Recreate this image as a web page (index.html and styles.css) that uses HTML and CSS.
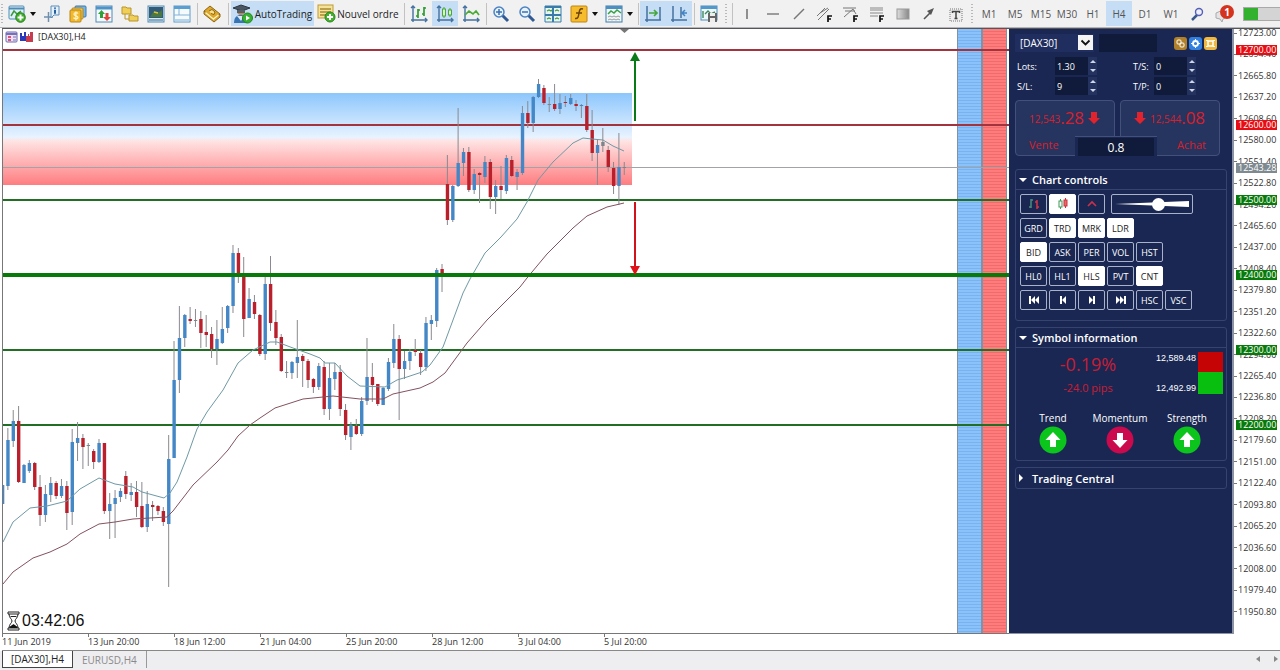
FILE: index.html
```html
<!DOCTYPE html>
<html lang="fr">
<head>
<meta charset="utf-8">
<title>[DAX30],H4</title>
<link rel="stylesheet" href="styles.css">
</head>
<body>
<header class="toolbar">
  <span class="grip"></span>
  <button class="tool tool-drop" aria-label="Nouveau graphique"><svg width="18" height="18" viewBox="0 0 18 18"><rect x="1" y="1" width="15" height="13" rx="1" fill="#dff0fb" stroke="#4f8cb5"/><path d="M1 3.500h15" stroke="#4f8cb5" stroke-width="2"/><path d="M3 11l3-5 3 3 4-3" fill="none" stroke="#3b9a3b" stroke-width="1.500"/><circle cx="12.500" cy="12.500" r="4.800" fill="#3fae2a" stroke="#2a7d1c"/><path d="M12.500 9.500v6M9.500 12.500h6" stroke="#fff" stroke-width="2"/></svg><i class="caret"></i></button>
  <button class="tool" aria-label="Viseur"><svg width="18" height="18" viewBox="0 0 18 18"><path d="M1 12h9M5.500 7v10" stroke="#6f8fae" stroke-width="1.500"/><path d="M8 1h8v9h-5l-3 3z" fill="#e4f0fa" stroke="#5d8db5"/><path d="M12 4.800v4M12 2.500v1.300" stroke="#235fa0" stroke-width="2"/></svg></button>
  <button class="tool" aria-label="Observation du marché"><svg width="18" height="18" viewBox="0 0 18 18"><rect x="6" y="1" width="11" height="11" rx="1" fill="#76b5e6" stroke="#3878ad"/><rect x="3" y="3" width="11" height="11" rx="1" fill="#e8c860" stroke="#b98515"/><rect x="1" y="5" width="11" height="12" rx="1" fill="#f1b92f" stroke="#b98515"/><path d="M9 8.500c-1-1.500-4-1-4 .7 0 2 4 1.200 4 3.200 0 1.800-3.500 1.900-4.500.3M6.900 6.500v9" stroke="#fff3c4" stroke-width="1.300" fill="none"/></svg></button>
  <button class="tool" aria-label="Fenêtre de données"><svg width="18" height="18" viewBox="0 0 18 18"><rect x="1" y="1" width="16" height="16" fill="#f4f9fd" stroke="#4f8cb5"/><path d="M1 3h16" stroke="#4d93c8" stroke-width="3"/><path d="M6.500 5l3.500 4H8v4H5V9H3z" fill="#2fa137"/><path d="M12 16l-4-4h2.500V8h3v4H16z" fill="#e0453a"/></svg></button>
  <button class="tool" aria-label="Navigateur"><svg width="18" height="18" viewBox="0 0 18 18"><path d="M1 2h4l1 1h4v6H1zM8 10h4l1 1h4v5H8z" fill="#f0cf58" stroke="#b9952c"/><path d="M4 9v5h4" fill="none" stroke="#b9952c"/></svg></button>
  <button class="tool" aria-label="Terminal"><svg width="18" height="18" viewBox="0 0 18 18"><rect x="1" y="1" width="16" height="16" fill="#dce8f0" stroke="#4f8cb5"/><rect x="2" y="2" width="14" height="11" fill="#315b78"/><path d="M3 12l4-6 4 2 4-3v7z" fill="#4b7840"/><path d="M7 7l4 1" stroke="#d8c33c" stroke-width="1.500"/><path d="M2 15h14" stroke="#84aac5" stroke-width="2"/></svg></button>
  <button class="tool" aria-label="Testeur"><svg width="18" height="18" viewBox="0 0 18 18"><rect x="1" y="1" width="16" height="16" fill="#f5fafd" stroke="#5f9cc8"/><path d="M1 2.500h16" stroke="#5b9fd0" stroke-width="3"/><path d="M1 10h16M6 4v6" stroke="#83b4d6"/><path d="M2 15h14" stroke="#b7d5e8" stroke-width="2"/></svg></button>
  <span class="sep"></span>
  <button class="tool" aria-label="MetaEditor"><svg width="18" height="18" viewBox="0 0 18 18"><path d="M1 6l6-5 10 8v3l-6 5L1 9z" fill="#dfa62a" stroke="#8a681b"/><path d="M1 6l10 8 6-5" fill="none" stroke="#8a681b"/><path d="M2.500 7.500l8 6.500 5-4" fill="none" stroke="#fff3b8" stroke-width="1.500"/><path d="M6 6l3-1.500 3 2.500-1 2.500-3-1" fill="#fae08a" stroke="#8a681b"/></svg></button>
  <span class="sep sep-wide"></span>
  <button class="tool tool-auto pressed"><svg width="20" height="20" viewBox="0 0 20 20"><circle cx="8" cy="7" r="4" fill="#bd8354"/><path d="M0 4l8-3 9 3-8 3z" fill="#4a5661" stroke="#2e3842"/><path d="M4 6v3h8V6" fill="#535f69"/><path d="M1 19c0-7 4-8 7-8s6 2 6 8z" fill="#3775b4"/><path d="M4 12l4 5 3-5" fill="#dce9f4"/><circle cx="14.500" cy="14" r="5" fill="#37b131" stroke="#22871f"/><path d="M13 11.500v5l4-2.500z" fill="#fff"/></svg><span>AutoTrading</span></button>
  <button class="tool tool-order"><svg width="19" height="19" viewBox="0 0 19 19"><rect x="1" y="1" width="15" height="13" fill="#f6e399" stroke="#bd9b32"/><path d="M3 5h11M3 8h11M3 11h6" stroke="#a78935" stroke-width="1.500"/><circle cx="13" cy="13" r="5" fill="#45b22d" stroke="#2b831e"/><path d="M13 10v6M10 13h6" stroke="#fff" stroke-width="2"/></svg><span>Nouvel ordre</span></button>
  <span class="sep"></span>
  <button class="tool" aria-label="Barres"><svg width="18" height="18" viewBox="0 0 18 18"><path d="M3 1v16M1 15h16M1 3l2-2 2 2M15 13l2 2-2 2" fill="none" stroke="#4472a0" stroke-width="1.400"/><path d="M8 4v9M6 11h2M8 5h2M14 2v9M12 9h2M14 3h2" stroke="#2f9c2f" stroke-width="1.700"/></svg></button>
  <button class="tool pressed" aria-label="Chandeliers"><svg width="18" height="18" viewBox="0 0 18 18"><path d="M3 1v16M1 15h16M1 3l2-2 2 2M15 13l2 2-2 2" fill="none" stroke="#4472a0" stroke-width="1.400"/><path d="M8 2v11M14 3v9" stroke="#4aa63f"/><rect x="6.500" y="4" width="3" height="7" fill="#d8f2ca" stroke="#4aa63f"/><rect x="12.500" y="5" width="3" height="5" fill="#d8f2ca" stroke="#4aa63f"/></svg></button>
  <button class="tool" aria-label="Ligne"><svg width="18" height="18" viewBox="0 0 18 18"><path d="M3 1v16M1 15h16M1 3l2-2 2 2M15 13l2 2-2 2" fill="none" stroke="#4472a0" stroke-width="1.400"/><path d="M3 10l4-4 4 3 3-3 3 4" fill="none" stroke="#49ad35" stroke-width="1.700"/></svg></button>
  <span class="sep"></span>
  <button class="tool" aria-label="Zoom avant"><svg width="18" height="18" viewBox="0 0 18 18"><path d="M10 10l6 6" stroke="#315a93" stroke-width="3"/><circle cx="7" cy="7" r="5" fill="#e6f2fd" stroke="#4b83c1" stroke-width="1.500"/><path d="M7 4v6M4 7h6" stroke="#3c70ad" stroke-width="1.500"/></svg></button>
  <button class="tool" aria-label="Zoom arrière"><svg width="18" height="18" viewBox="0 0 18 18"><path d="M10 10l6 6" stroke="#315a93" stroke-width="3"/><circle cx="7" cy="7" r="5" fill="#e6f2fd" stroke="#4b83c1" stroke-width="1.500"/><path d="M4 7h6" stroke="#3c70ad" stroke-width="1.500"/></svg></button>
  <button class="tool" aria-label="Mosaïque"><svg width="18" height="18" viewBox="0 0 18 18"><path d="M1 1h16v16H1z" fill="#e7f5ee" stroke="#397cab"/><path d="M1 2h16M1 10h16M9 1v16" stroke="#397cab" stroke-width="2"/><path d="M3 6l2-1 2 1 1-1M11 6l2-1 2 1M3 14l2-1 2 1M11 14l2-1 2 1" fill="none" stroke="#3d9f48" stroke-width="1.300"/></svg></button>
  <button class="tool tool-drop" aria-label="Indicateurs"><svg width="18" height="18" viewBox="0 0 18 18"><rect x="1" y="1" width="16" height="16" rx="1" fill="#f6bc2c" stroke="#bf8411"/><path d="M13 4c-3-1-3.500 1-4 4-.6 4-1 6-4 5.500M6 8h6" fill="none" stroke="#6e430b" stroke-width="1.500"/></svg><i class="caret"></i></button>
  <button class="tool tool-drop" aria-label="Modèles"><svg width="18" height="18" viewBox="0 0 18 18"><rect x="1" y="1" width="16" height="16" fill="#f2f8fa" stroke="#3a7cab"/><path d="M1 2.500h16" stroke="#4c8fc0" stroke-width="3"/><path d="M3 9l3-3 3 2 3-3 4 3" fill="none" stroke="#37a144" stroke-width="1.500"/><path d="M3 12l2-1 2 1 2-1 2 1 2-1 2 1M3 15l2-1 2 1 2-1 2 1 2-1 2 1" fill="none" stroke="#9a9a9a"/></svg><i class="caret"></i></button>
  <span class="sep"></span>
  <button class="tool pressed" aria-label="Défilement auto"><svg width="18" height="18" viewBox="0 0 18 18"><path d="M3 1v16M1 15h16M16 2v13" fill="none" stroke="#4472a0" stroke-width="1.500"/><path d="M5 8h8M10 5l3 3-3 3" fill="none" stroke="#45a63b" stroke-width="1.700"/></svg></button>
  <button class="tool pressed" aria-label="Décalage du graphique"><svg width="18" height="18" viewBox="0 0 18 18"><path d="M3 1v16M1 15h16M11 2v11" fill="none" stroke="#4472a0" stroke-width="1.500"/><path d="M17 8h-5M15 5l-3 3 3 3" fill="none" stroke="#4382c4" stroke-width="1.500"/></svg></button>
  <span class="sep"></span>
  <button class="tool" aria-label="Enregistrer"><svg width="18" height="18" viewBox="0 0 18 18"><rect x="1" y="1" width="16" height="14" fill="#eef7fb" stroke="#4d8ebb"/><path d="M1 2.500h16" stroke="#5299c9" stroke-width="3"/><path d="M3 13V6M5 9l3-3 3 3 4-2" fill="none" stroke="#3e8a60" stroke-width="1.400"/><path d="M8 8h9v9H8z" fill="#666"/><path d="M10 8h5v3h-5zM10 13h5v4h-5z" fill="#eee"/></svg></button>
  <span class="grip grip-wide"></span><span class="sep"></span>
  <button class="tool" aria-label="Ligne verticale"><svg width="18" height="18" viewBox="0 0 18 18"><path d="M9 4v10" stroke="#666" stroke-width="1.400"/></svg></button>
  <button class="tool" aria-label="Ligne horizontale"><svg width="18" height="18" viewBox="0 0 18 18"><path d="M3 9h12" stroke="#777" stroke-width="1.400"/></svg></button>
  <button class="tool" aria-label="Ligne de tendance"><svg width="18" height="18" viewBox="0 0 18 18"><path d="M4 14L14 4" stroke="#777" stroke-width="1.400"/></svg></button>
  <button class="tool" aria-label="Canal"><svg width="18" height="18" viewBox="0 0 18 18"><path d="M1 11l8-8M5 12l8-8M4 8l8-5M2 15l6-6" stroke="#777"/><path d="M12 17v-6h4M12 14h3" fill="none" stroke="#111" stroke-width="1.700"/></svg></button>
  <button class="tool" aria-label="Éventail Fibonacci"><svg width="18" height="18" viewBox="0 0 18 18"><path d="M1 3h13M3 6h10M2 12l9-8 3 5" fill="none" stroke="#777"/><path d="M12 17v-6h4M12 14h3" fill="none" stroke="#111" stroke-width="1.700"/></svg></button>
  <button class="tool" aria-label="Fibonacci"><svg width="18" height="18" viewBox="0 0 18 18"><path d="M2 3h13M2 5h13M2 8h13M2 11h8" stroke="#888"/><path d="M12 17v-6h4M12 14h3" fill="none" stroke="#111" stroke-width="1.700"/></svg></button>
  <button class="tool" aria-label="Formes"><svg width="18" height="18" viewBox="0 0 18 18"><defs><linearGradient id="shape"><stop stop-color="#ddd"/><stop offset="1" stop-color="#888"/></linearGradient></defs><rect x="3" y="4" width="12" height="10" fill="url(#shape)" stroke="#999"/></svg></button>
  <button class="tool" aria-label="Flèche"><svg width="18" height="18" viewBox="0 0 18 18"><path d="M4 14l7-7" stroke="#555" stroke-width="1.600"/><path d="M7 6l7-3-3 7z" fill="#555"/></svg></button>
  <button class="tool" aria-label="Texte"><svg width="18" height="18" viewBox="0 0 18 18"><rect x="4" y="4" width="12" height="12" fill="#eee" stroke="#777" stroke-dasharray="1 1"/><path d="M6.500 8V6.500h7V8M10 6.500v7M8.500 13.500h3" fill="none" stroke="#444" stroke-width="1.500"/></svg></button>
  <span class="grip grip-wide"></span>
  <button class="tool">M1</button><button class="tool">M5</button><button class="tool">M15</button><button class="tool">M30</button><button class="tool">H1</button><button class="tool pressed">H4</button><button class="tool">D1</button><button class="tool">W1</button>
  <button class="tool" aria-label="Rechercher"><svg width="18" height="18" viewBox="0 0 18 18"><path d="M9 10l-5 5" stroke="#39598c" stroke-width="2.500"/><circle cx="11" cy="7" r="3.500" fill="#eef" stroke="#5360b4" stroke-width="1.400"/></svg></button>
  <button class="tool chat" aria-label="Messages"><svg width="18" height="18" viewBox="0 0 18 18"><path d="M2 8l7-3 5 6-5 3-1 3-2-3-4-1z" fill="#e4e4e4" stroke="#aaa"/></svg><span class="badge">1</span></button>
  <span class="signal"></span>
</header>

<main class="workspace">
  <section class="plot" aria-label="Graphique DAX30">
    <div class="zone"></div>
    <div class="strip strip-blue"></div>
    <div class="strip strip-red"></div>
    <svg class="canvas" id="canvas"></svg>
    <div class="chart-title">
      <svg width="28" height="12" viewBox="0 0 28 12"><rect x="1" y="1" width="11" height="10" rx="1" fill="#eee2f2" stroke="#6c68b0"/><path d="M1 3h11" stroke="#7472ba" stroke-width="2"/><path d="M3 5h3v2H3zM3 8h3v2H3z" fill="#d9537b"/><path d="M8 6h3M8 9h3" stroke="#7472ba"/><path d="M15 2h2v3h2V1h2v9h-6z" fill="#2b38bc"/><path d="M21 5h2V3h1v2h1V1h3v10h-7z" fill="#c73d50"/></svg>
      <span>[DAX30],H4</span>
    </div>
    <div class="countdown"><svg width="13" height="20" viewBox="0 0 13 20"><path d="M1 1h11v2H1zM1 17h11v2H1zM2 3c0 4 3 5 3 7s-3 3-3 7M11 3c0 4-3 5-3 7s3 3 3 7M3.500 5.500h6" fill="none" stroke="#222"/><path d="M2.500 17c0-2 3-3 4-4 1 1 4 2 4 4z" fill="#111"/></svg><span>03:42:06</span></div>
  </section>

  <aside class="panel">
    <div class="symbol-row">
      <div class="picker"><select aria-label="Symbole"><option>[DAX30]</option></select><svg width="15" height="15" viewBox="0 0 15 15"><path d="M0 0h15v15H0z" fill="#f4f4f4"/><path d="M3.500 5.500l4 4 4-4" fill="none" stroke="#111" stroke-width="1.800"/></svg></div>
      <input class="dark-input" aria-label="Commentaire">
      <div class="quick">
        <button class="quick-btn brown" aria-label="Lier"><svg width="9" height="9" viewBox="0 0 9 9"><rect x="1" y="1" width="4" height="4" rx="1" fill="none" stroke="#fff"/><rect x="4" y="4" width="4" height="4" rx="1" fill="none" stroke="#fff"/></svg></button>
        <button class="quick-btn azure" aria-label="Réglages"><svg width="9" height="9" viewBox="0 0 9 9"><circle cx="4.500" cy="4.500" r="2.500" fill="none" stroke="#fff" stroke-width="1.800"/><path d="M4.500 0v2M4.500 7v2M0 4.500h2M7 4.500h2" stroke="#fff"/></svg></button>
        <button class="quick-btn amber" aria-label="Agrandir"><svg width="9" height="9" viewBox="0 0 9 9"><rect x="2" y="2" width="5" height="5" fill="none" stroke="#fff" stroke-width="1.500"/><path d="M0 1.500h2M7 1.500h2M0 7.500h2M7 7.500h2" stroke="#fff"/></svg></button>
      </div>
    </div>
    <div class="fields">
      <label for="lots">Lots:</label><div class="spin"><input id="lots" value="1.30"><span><button class="up" aria-label="Plus"></button><button class="down" aria-label="Moins"></button></span></div>
      <label for="ts">T/S:</label><div class="spin"><input id="ts" value="0"><span><button class="up" aria-label="Plus"></button><button class="down" aria-label="Moins"></button></span></div>
      <label for="sl">S/L:</label><div class="spin"><input id="sl" value="9"><span><button class="up" aria-label="Plus"></button><button class="down" aria-label="Moins"></button></span></div>
      <label for="tp">T/P:</label><div class="spin"><input id="tp" value="0"><span><button class="up" aria-label="Plus"></button><button class="down" aria-label="Moins"></button></span></div>
    </div>
    <div class="trade">
      <button class="deal sell"><span class="quote"><small>12,543</small><b>.28</b><svg width="12" height="14" viewBox="0 0 12 14"><path d="M3 1h6v6h3l-6 6-6-6h3z" fill="#e0232d"/></svg></span><span class="side">Vente</span></button>
      <button class="deal buy"><span class="quote"><svg width="12" height="14" viewBox="0 0 12 14"><path d="M3 1h6v6h3l-6 6-6-6h3z" fill="#e0232d"/></svg><small>12,544</small><b>.08</b></span><span class="side">Achat</span></button>
      <div class="spread"><input value="0.8" aria-label="Spread" readonly></div>
    </div>

    <section class="box controls">
      <h2><i class="fold open"></i>Chart controls</h2>
      <div class="rows">
        <div class="row">
          <button class="key" aria-label="Barres"><svg width="12" height="12" viewBox="0 0 12 12"><path d="M3 1v9M1 9h2M3 2h2" stroke="#4a8b7d" stroke-width="1.500"/><path d="M9 2v9M7 4h2M9 9h2" stroke="#d13648" stroke-width="1.500"/></svg></button>
          <button class="key on" aria-label="Chandeliers"><svg width="12" height="12" viewBox="0 0 12 12"><path d="M3.500 1v10" stroke="#3f9a57"/><rect x="2" y="3" width="3" height="6" fill="#fff" stroke="#3f9a57"/><path d="M8.500 0v10" stroke="#c7343f"/><rect x="7" y="2" width="3" height="6" fill="#e66" stroke="#c7343f"/></svg></button>
          <button class="key" aria-label="Ligne"><svg width="12" height="12" viewBox="0 0 12 12"><path d="M2 8l4-4 4 4" fill="none" stroke="#c9304a" stroke-width="1.700"/></svg></button>
          <div class="slider"><svg viewBox="0 0 74 6" preserveAspectRatio="none"><path d="M0 3L74 0v6z" fill="#fff"/></svg><input type="range" min="0" max="100" value="60" aria-label="Zoom"></div>
        </div>
        <div class="row"><button class="key">GRD</button><button class="key on">TRD</button><button class="key on">MRK</button><button class="key on">LDR</button></div>
        <div class="row"><button class="key on">BID</button><button class="key">ASK</button><button class="key">PER</button><button class="key">VOL</button><button class="key">HST</button></div>
        <div class="row"><button class="key">HL0</button><button class="key">HL1</button><button class="key on">HLS</button><button class="key">PVT</button><button class="key on">CNT</button></div>
        <div class="row">
          <button class="key" aria-label="Début"><svg width="12" height="10" viewBox="0 0 12 10"><path d="M1 1h2v8H1zM7 1v8L3 5zM11 1v8L7 5z" fill="#fff"/></svg></button>
          <button class="key" aria-label="Précédent"><svg width="12" height="10" viewBox="0 0 12 10"><path d="M3 1h2v8H3zM9 1v8L5 5z" fill="#fff"/></svg></button>
          <button class="key" aria-label="Suivant"><svg width="12" height="10" viewBox="0 0 12 10"><path d="M7 1h2v8H7zM3 1v8l4-4z" fill="#fff"/></svg></button>
          <button class="key" aria-label="Fin"><svg width="12" height="10" viewBox="0 0 12 10"><path d="M9 1h2v8H9zM5 1v8l4-4zM1 1v8l4-4z" fill="#fff"/></svg></button>
          <button class="key">HSC</button><button class="key">VSC</button>
        </div>
      </div>
    </section>

    <section class="box symbol">
      <h2><i class="fold open"></i>Symbol information</h2>
      <div class="stats">
        <div class="change"><strong>-0.19%</strong><span>-24.0 pips</span></div>
        <div class="range"><span>12,589.48</span><span>12,492.99</span></div>
        <div class="meter"></div>
      </div>
      <div class="gauges">
        <div>Trend<svg width="28" height="28" viewBox="0 0 28 28"><circle cx="14" cy="14" r="13.500" fill="#0cc51c"/><path d="M14 6l7.500 8H17v7h-6v-7H6.500z" fill="#fff"/></svg></div>
        <div>Momentum<svg width="28" height="28" viewBox="0 0 28 28"><circle cx="14" cy="14" r="13.500" fill="#cb0a4d"/><path d="M14 22l7.500-8H17V7h-6v7H6.500z" fill="#fff"/></svg></div>
        <div>Strength<svg width="28" height="28" viewBox="0 0 28 28"><circle cx="14" cy="14" r="13.500" fill="#0cc51c"/><path d="M14 6l7.500 8H17v7h-6v-7H6.500z" fill="#fff"/></svg></div>
      </div>
    </section>
    <section class="box"><h2><i class="fold"></i>Trading Central</h2></section>
  </aside>

  <div class="scale" id="scale"></div>
</main>

<div class="dates">
  <span>11 Jun 2019</span><span>13 Jun 20:00</span><span>18 Jun 12:00</span><span>21 Jun 04:00</span><span>25 Jun 20:00</span><span>28 Jun 12:00</span><span>3 Jul 04:00</span><span>5 Jul 20:00</span>
</div>

<nav class="tabs">
  <button class="tab active">[DAX30],H4</button><button class="tab">EURUSD,H4</button>
  <span class="scrollers"><button class="left" aria-label="Gauche"></button><button class="right" aria-label="Droite"></button></span>
</nav>
<script src="chart.js"></script>
</body>
</html>
```
FILE: styles.css
```css
* { box-sizing: border-box; }
body { margin: 0; min-height: 100vh; display: flex; flex-direction: column; background: #fff; color: #222; font-family: "Open Sans", "Noto Sans", sans-serif; font-size: 11px; overflow-x: hidden; }
button, input, select { font: inherit; color: inherit; margin: 0; padding: 0; border: 0; background: none; border-radius: 0; min-width: 0; }
svg { display: block; flex: none; }

/* Toolbar */
.toolbar { display: flex; align-items: center; height: 28px; background: #f1f1f2; border-bottom: 1px solid #b5b5b7; overflow: hidden; flex: none; }
.tool { flex: none; width: 26px; height: 25px; display: flex; align-items: center; justify-content: center; font-size: 10px; color: #555; white-space: nowrap; }
.tool-drop { width: 35px; gap: 4px; }
.tool-auto { width: 83px; gap: 2px; color: #222; }
.tool-order { width: 88px; gap: 1px; color: #222; }
.pressed { background: #c5def5; }
.caret { border: 3px solid transparent; border-top: 4px solid #111; border-bottom: 0; }
.sep { flex: none; width: 4px; height: 22px; background: linear-gradient(#c2c2c2, #c2c2c2) center / 1px 100% no-repeat; }
.sep-wide { width: 6px; }
.grip { flex: none; width: 4px; height: 20px; background: repeating-linear-gradient(#b9b9b9 0 1px, transparent 1px 3px) center / 2px 100% no-repeat; }
.grip-wide { width: 8px; }
.chat { position: relative; }
.badge { position: absolute; right: 2px; top: 4px; width: 14px; height: 14px; border-radius: 7px; background: #d3331f; color: #fff; font-size: 10px; font-weight: 700; line-height: 14px; }
.signal { flex: 1; min-width: 32px; margin-left: 7px; height: 14px; border: 1px solid #a9a9a9; border-right: 0; background: linear-gradient(90deg, #32b12e 14px, #d4d4d4 14px); }

/* Workspace */
.workspace { flex: 1; display: flex; margin-left: 2px; border-top: 1px solid #55555a; min-height: 480px; }
.plot { flex: 1; position: relative; border-left: 1px solid #777; border-bottom: 1px solid #777; overflow: hidden; min-width: 0; }
.canvas { position: absolute; inset: 0; width: 100%; height: 100%; }
.zone { position: absolute; left: 0; top: 64px; width: 629px; height: 92px; background: linear-gradient(#8cc6fc 0%, #e8f3ff 48%, #ffe4e4 52%, #fe7d80 100%); }
.strip { position: absolute; top: 0; bottom: 0; width: 25px; border: 1px solid #8391a5; border-width: 0 1px; }
.strip-blue { right: 27px; background: repeating-linear-gradient(#8ac2fb 0 2px, #79b2ee 2px 3px); }
.strip-red { right: 2px; background: repeating-linear-gradient(#ff7c7c 0 2px, #f06b6c 2px 3px); }
.chart-title { position: absolute; left: 2px; top: 2px; display: flex; align-items: center; gap: 5px; font-size: 9px; line-height: 12px; }
.countdown { position: absolute; left: 4px; bottom: 2px; display: flex; align-items: center; gap: 2px; font: 16px/20px "Liberation Sans", Arial, sans-serif; color: #111; }

.scale { position: relative; width: 46px; flex: none; display: flex; flex-direction: column; justify-content: space-between; padding-bottom: 18px; font-size: 9px; line-height: 8px; color: #333; }
.scale span { display: flex; align-items: center; gap: 1px; }
.scale span::before { content: ""; width: 3px; height: 1px; background: #777; }
.scale .tag { position: absolute; left: 2px; width: 41px; height: 10px; line-height: 10px; padding-left: 2px; color: #fff; margin-top: -5px; }
.tag.red { background: #e80d12; }
.tag.green { background: #087a0a; }
.tag.gray { background: #7e8a90; }

.dates { height: 17px; flex: none; display: flex; margin-left: 2px; border-bottom: 1px solid #888; font-size: 9px; line-height: 15px; color: #333; }
.dates span { width: 86px; flex: none; background: linear-gradient(#777, #777) 0 0 / 1px 3px no-repeat; white-space: nowrap; }

.tabs { height: 19px; flex: none; display: flex; align-items: flex-start; background: #eeedf0; padding-left: 2px; }
.tab { height: 17px; padding: 0 9px; font-size: 10px; color: #8a8a8a; border-right: 1px solid #999; }
.tab.active { background: #fff; color: #222; border: 1px solid #444; border-top: 0; padding: 0 8px; }
.scrollers { margin-left: auto; display: flex; gap: 14px; padding: 5px 2px; }
.scrollers button { width: 4px; height: 6px; border: 3px solid transparent; }
.scrollers .left { border-right: 4px solid #888; border-left: 0; }
.scrollers .right { border-left: 4px solid #888; border-right: 0; }

/* Trading panel */
.panel { width: 225px; flex: none; background: #1a2753; color: #fff; padding: 5px 5px 0 6px; border-right: 2px solid #8b93a5; border-bottom: 1px solid #8b93a5; }
.symbol-row { display: flex; height: 18px; gap: 5px; align-items: center; }
.picker { position: relative; width: 79px; height: 18px; background: #1f2e5e; }
.picker select { appearance: none; width: 100%; height: 18px; padding-left: 5px; font-size: 10px; }
.picker svg { position: absolute; right: 1px; top: 1px; pointer-events: none; }
.dark-input { width: 58px; height: 18px; background: #101b3b; }
.quick { margin-left: auto; margin-right: 10px; display: flex; gap: 2px; }
.quick-btn { width: 13px; height: 13px; border-radius: 3px; display: grid; place-items: center; }
.brown { background: #b0812a; }
.azure { background: #3180e0; }
.amber { background: #f0b83f; }
.fields { display: grid; grid-template-columns: 38px 78px 21px 44px; grid-auto-rows: 18px; gap: 2px 0; margin-top: 5px; font-size: 9px; align-items: center; padding-left: 2px; }
.spin { display: flex; height: 18px; }
.spin input { width: 33px; background: #101b3b; padding-left: 2px; }
.spin span { display: flex; flex-direction: column; width: 9px; background: #23325f; }
.spin button { flex: 1; display: grid; place-items: center; }
.spin button::before { content: ""; border: 3px solid transparent; }
.spin .up::before { border-bottom-color: #cfd6ea; border-top: 0; }
.spin .down::before { border-top-color: #cfd6ea; border-bottom: 0; }

.trade { position: relative; display: grid; grid-template-columns: 1fr 1fr; gap: 5px; height: 56px; margin: 5px 7px 13px 0; }
.deal { background: #26355f; border: 1px solid #43517a; border-radius: 4px; color: #d81f2c; display: flex; flex-direction: column; justify-content: space-between; align-items: flex-start; padding: 1px 13px 0; }
.quote { display: flex; align-items: center; height: 31px; line-height: 26px; }
.quote small { font-size: 10px; padding-top: 2px; }
.quote b { font-size: 17px; font-weight: 400; }
.quote svg { margin: 0 4px; }
.buy .quote { margin-left: -4px; }
.side { font-size: 11px; line-height: 20px; }
.buy .side { align-self: flex-end; }
.spread { position: absolute; left: 0; right: 3px; bottom: 0; width: 82px; height: 20px; margin: 0 auto; background: #1a2753; border-top: 1px solid #43517a; padding: 1px 3px 0; }
.spread input { width: 100%; height: 18px; background: #101b3b; text-align: center; font-size: 12px; }

.box { border: 1px solid #35436f; border-radius: 3px; margin-bottom: 6px; }
.box h2 { margin: 0; height: 20px; display: flex; align-items: center; font-size: 11px; font-weight: 600; }
.fold { width: 16px; display: flex; padding-left: 3px; }
.fold::before { content: ""; border: 4px solid transparent; border-left-color: #fff; border-right: 0; }
.fold.open::before { border: 4px solid transparent; border-top-color: #fff; border-bottom: 0; }
.controls h2, .symbol h2 { border-bottom: 1px solid #35436f; }
.rows { display: flex; flex-direction: column; gap: 4px; padding: 4px 4px 10px; }
.row { display: flex; gap: 2px; }
.key { width: 27px; height: 20px; flex: none; border: 1px solid #a9b2cb; border-radius: 2px; font-size: 9px; display: grid; place-items: center; }
.key.on { background: #fff; color: #222; border-color: #fff; }
.slider { position: relative; width: 82px; height: 20px; margin-left: 4px; border: 1px solid #a9b2cb; border-radius: 2px; display: grid; align-items: center; padding: 0 3px; }
.slider svg { grid-area: 1 / 1; width: 100%; height: 6px; }
.slider input { grid-area: 1 / 1; width: 100%; height: 14px; appearance: none; position: relative; }
.slider input::-webkit-slider-thumb { appearance: none; width: 13px; height: 13px; border-radius: 7px; background: #fff; }

.stats { display: flex; height: 50px; padding: 4px 3px 2px 0; }
.change { flex: 1; display: flex; flex-direction: column; align-items: center; padding: 3px 0 0 4px; color: #c71e35; }
.change strong { font-size: 18px; font-weight: 400; line-height: 18px; }
.change span { font-size: 11px; line-height: 26px; white-space: nowrap; margin-top: 2px; }
.range { display: flex; flex-direction: column; justify-content: space-between; font: 9px/12px "Liberation Sans", Arial, sans-serif; padding-right: 2px; height: 42px; }
.meter { width: 25px; height: 42px; background: linear-gradient(#c50505 20px, #08bf10 20px); }
.gauges { display: grid; grid-template-columns: repeat(3, 67px); justify-content: center; padding: 12px 0 6px; margin-right: 2px; }
.gauges > div { display: flex; flex-direction: column; align-items: center; font-size: 10px; line-height: 16px; }
```
FILE: chart.js
```js
const NS = "http://www.w3.org/2000/svg";
const TOP_PRICE = 12723, PX_PER_POINT = 0.7497, TOP_Y = 33;
const ORIGIN = { x: 3, y: 29 };
const STEP = 5.36;
const priceY = p => TOP_Y + (TOP_PRICE - p) * PX_PER_POINT;

const canvas = document.getElementById("canvas");
const layer = document.createElementNS(NS, "g");
layer.setAttribute("transform", `translate(${-ORIGIN.x} ${-ORIGIN.y})`);
canvas.append(layer);

function add(name, attrs) {
  const el = document.createElementNS(NS, name);
  for (const k in attrs) el.setAttribute(k, attrs[k]);
  layer.append(el);
}

const levels = [
  [12700, "red", 2], [12600, "red", 2], [12543.28, "gray", 1],
  [12500, "green", 2], [12400, "green", 4], [12300, "green", 2], [12200, "green", 2]
];
const lineColor = { red: "#a3333c", gray: "#a0a4a8", green: "#236e25" };

function level([price, kind, width]) {
  const y = Math.round(priceY(price));
  add("rect", { x: 0, y: Math.floor(y - width / 2), width: "101%", height: width, fill: width === 4 ? "#087a0a" : lineColor[kind] });
}

// kind, body top, body bottom, wick top, wick bottom
const candles = `b 485 504 485 504|b 440 486 428 490|b 421 441 410 447|r 421 482 406 483|b 465 483 464 483|b 463 471 460 473|r 463 487 462 490|r 487 515 475 526|b 494 515 485 522|b 483 495 477 502|r 483 496 481 499|b 486 496 479 498|r 486 513 481 530|b 442 512 429 525|b 438 443 422 461|r 438 447 434 469|g 445 446 443 466|r 451 462 449 469|b 443 462 439 463|r 443 511 443 514|b 504 511 493 539|b 498 504 490 538|b 491 497 488 502|r 476 494 471 499|b 492 495 483 501|r 492 507 481 517|r 506 527 482 528|b 504 527 491 532|r 505 507 501 521|r 506 511 505 515|r 511 522 507 526|b 459 524 435 587|b 380 458 341 458|b 338 380 306 393|b 315 338 314 347|r 319 321 307 324|g 320 321 309 327|r 319 333 311 348|r 332 335 315 347|r 334 349 327 358|b 339 349 320 365|b 329 343 307 344|b 306 328 305 333|b 253 306 245 313|r 253 274 248 283|r 275 319 257 337|b 299 318 288 318|r 302 314 295 319|r 315 354 314 356|b 284 354 276 360|r 284 323 256 331|r 322 338 310 345|r 337 371 334 372|g 372 373 361 378|b 362 373 361 379|b 357 363 320 378|r 356 361 354 387|r 361 380 359 388|r 379 387 378 393|b 366 387 363 390|r 367 409 361 415|b 378 409 363 420|b 372 379 363 390|r 372 409 365 416|r 410 435 404 440|b 425 437 422 450|r 426 434 419 435|b 401 434 397 436|b 377 401 338 405|r 377 385 363 402|r 384 404 384 406|b 388 405 387 405|b 362 389 358 391|b 339 363 324 368|r 339 369 335 420|b 361 369 351 379|b 352 361 349 370|r 350 352 339 356|r 353 367 350 375|b 323 367 317 371|b 320 324 315 340|b 270 321 268 327|r 269 274 264 292|r 184 220 155 225|b 186 220 185 222|b 163 186 108 187|b 152 163 148 176|r 152 190 147 192|b 174 190 169 194|r 173 175 172 203|b 162 177 156 183|r 162 197 159 209|b 186 197 180 214|r 186 190 166 199|b 158 191 155 194|r 160 176 156 177|b 172 177 169 190|b 113 173 106 175|r 113 123 101 128|b 97 123 96 132|b 84 97 79 98|r 88 103 85 105|g 104 105 97 112|r 104 109 84 111|b 103 109 94 114|r 102 103 96 107|b 98 104 94 105|r 104 106 100 111|b 105 106 104 118|r 106 130 94 132|r 130 153 110 161|b 145 153 139 185|g 142 146 128 152|r 150 167 146 172|r 168 186 162 194|b 167 186 133 205|g 167 168 162 175`.split("|").map(s => s.split(" "));
const candleColor = { b: "#4487c6", r: "#b9202b", g: "#7d858c" };

levels.filter(l => l[2] !== 4).forEach(level);

const fast = "3,542 13,522 30,508 47,506 67,501 80,489 99,478 115,484 133,487 142,492 153,495 164,498 170,493 177,482 187,457 197,429 207,412 223,390 238,363 253,350 270,342 277,342 293,348 310,354 320,358 325,363 335,363 347,376 360,386 385,387 397,380 407,377 422,372 430,365 443,347 453,320 463,293 470,279 485,253 501,237 517,219 527,202 538,180 553,162 573,143 583,138 592,139 603,140 613,146 624,151";
const slow = "3,584 13,572 33,558 50,552 67,544 80,534 99,524 115,522 133,519 167,517 173,511 193,485 217,462 228,450 238,436 250,425 260,418 275,408 303,399 333,396 360,399 383,399 393,394 420,388 433,382 445,373 467,343 487,320 503,304 520,287 527,278 547,254 573,228 587,216 607,207 624,203";

candles.forEach(([kind, top, bottom, high, low], i) => {
  const x = 2.5 + STEP * i;
  add("rect", { x: x - 0.5, y: high, width: 1, height: low - high, fill: "#8a8a90" });
  add("rect", { x: x - 1.6, y: top, width: 3.4, height: Math.max(1, bottom - top), fill: candleColor[kind] });
});
add("polyline", { points: fast, fill: "none", stroke: "#6e99a5", "stroke-width": 1 });
add("polyline", { points: slow, fill: "none", stroke: "#83525e", "stroke-width": 1 });
levels.filter(l => l[2] === 4).forEach(level);

add("path", { d: "M635 121V60", stroke: "#087a18", "stroke-width": 2 });
add("path", { d: "M635 52l5 9h-10z", fill: "#087a18" });
add("path", { d: "M635 202V267", stroke: "#d0121a", "stroke-width": 2 });
add("path", { d: "M635 275l5-9h-10z", fill: "#e0121a" });
add("path", { d: "M620 29h9l-4.500 4z", fill: "#777" });

// Price scale
const scale = document.getElementById("scale");
for (let i = 0; i < 28; i++) {
  const label = document.createElement("span");
  label.textContent = (TOP_PRICE - 28.6 * i).toFixed(2);
  scale.append(label);
}
for (const [price, kind] of levels) {
  const tag = document.createElement("div");
  tag.className = "tag " + kind;
  tag.textContent = price.toFixed(2);
  tag.style.top = Math.round(priceY(price)) - ORIGIN.y + "px";
  scale.append(tag);
}
```
